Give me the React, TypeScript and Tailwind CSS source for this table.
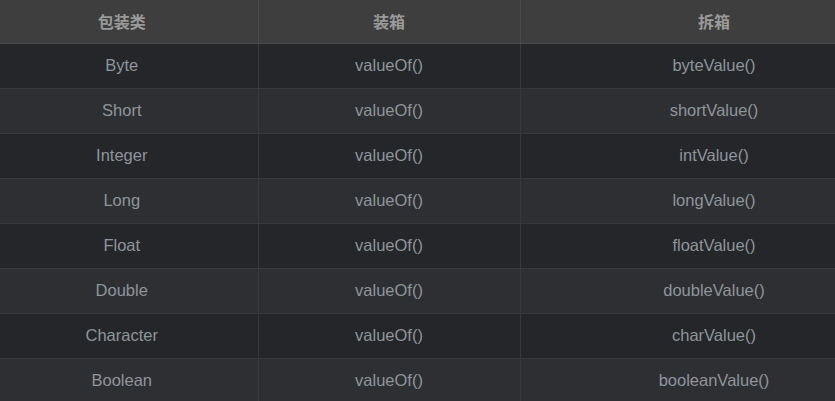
const rows = [
  ['Byte', 'valueOf()', 'byteValue()'],
  ['Short', 'valueOf()', 'shortValue()'],
  ['Integer', 'valueOf()', 'intValue()'],
  ['Long', 'valueOf()', 'longValue()'],
  ['Float', 'valueOf()', 'floatValue()'],
  ['Double', 'valueOf()', 'doubleValue()'],
  ['Character', 'valueOf()', 'charValue()'],
  ['Boolean', 'valueOf()', 'booleanValue()'],
];

export default function App() {
  return (
    <div className="w-[835px] h-[401px] overflow-hidden bg-[#252629]">
      <table
        className="-ml-[14px] w-[922px] table-fixed border-collapse text-[16.5px] text-[#8e959c]"
        style={{ fontFamily: '"Liberation Sans", Arial, "Noto Sans CJK SC", sans-serif' }}
      >
        <colgroup>
          <col className="w-[272px]" />
          <col className="w-[262px]" />
          <col className="w-[388px]" />
        </colgroup>
        <thead>
          <tr className="h-[43px] bg-[#3e3e3e]">
            {['包装类', '装箱', '拆箱'].map(h => (
              <th
                key={h}
                className="border-b border-r border-[#4a4a4a] text-[16px] font-bold text-[#9a9a9a]"
                style={{ fontFamily: '"Noto Sans CJK SC", sans-serif' }}
              >
                {h}
              </th>
            ))}
          </tr>
        </thead>
        <tbody>
          {rows.map((r, i) => (
            <tr key={r[0]} className={`h-[45px] ${i % 2 === 0 ? 'bg-[#252629]' : 'bg-[#2e2f32]'}`}>
              {r.map((c, j) => (
                <td key={j} className="border-b border-r border-[#38393c] text-center">
                  {c}
                </td>
              ))}
            </tr>
          ))}
        </tbody>
      </table>
    </div>
  );
}
